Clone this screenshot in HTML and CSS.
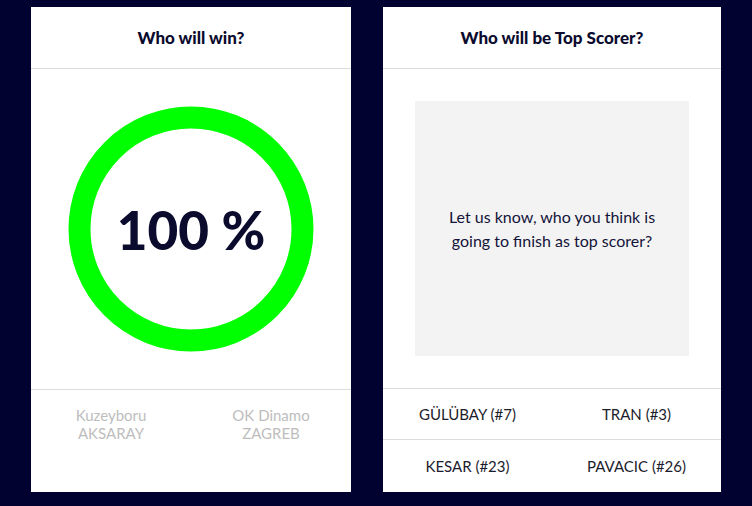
FILE: index.html
```html
<!DOCTYPE html>
<html>
<head>
<meta charset="utf-8">
<link rel="stylesheet" href="styles.css">
</head>
<body>
<div class="page">
  <section class="card card-win">
    <header class="card-head">Who will win?</header>
    <div class="win-body">
      <div class="ring">
        <svg width="246" height="246" viewBox="0 0 246 246">
          <circle cx="123" cy="123" r="111.5" fill="none" stroke="#00ff00" stroke-width="22"/>
        </svg>
        <span class="ring-label">100 %</span>
      </div>
    </div>
    <div class="teams">
      <div class="team">Kuzeyboru<br>AKSARAY</div>
      <div class="team">OK Dinamo<br>ZAGREB</div>
    </div>
  </section>
  <section class="card card-scorer">
    <header class="card-head">Who will be Top Scorer?</header>
    <div class="scorer-body">
      <div class="prompt">Let us know, who you think is<br>going to finish as top scorer?</div>
    </div>
    <div class="players">
      <div class="player">GÜLÜBAY (#7)</div>
      <div class="player">TRAN (#3)</div>
      <div class="player">KESAR (#23)</div>
      <div class="player">PAVACIC (#26)</div>
    </div>
  </section>
</div>
</body>
</html>
```
FILE: styles.css
```css
html, body {
  margin: 0;
  padding: 0;
  background: #020230;
}
body {
  font-family: Lato, "Open Sans", sans-serif;
  color: #0b0b2e;
}
.page {
  display: flex;
  gap: 32px;
  padding: 7px 31px 14px 31px;
  height: 485px;
}
.card {
  background: #ffffff;
  display: flex;
  flex-direction: column;
  height: 485px;
}
.card-win { width: 320px; }
.card-scorer { width: 338px; }
.card-head {
  height: 61px;
  border-bottom: 1px solid #dcdcdc;
  display: flex;
  align-items: center;
  justify-content: center;
  font-weight: 900;
  font-size: 17px;
  color: #0b0b2e;
}
.win-body {
  height: 320px;
  border-bottom: 1px solid #dcdcdc;
  display: flex;
  align-items: center;
  justify-content: center;
}
.ring {
  position: relative;
  width: 246px;
  height: 246px;
}
.ring svg { display: block; }
.ring-label {
  position: absolute;
  inset: 0;
  display: flex;
  align-items: center;
  justify-content: center;
  font-size: 53px;
  font-weight: 900;
  color: #0b0b2e;
}
.teams {
  flex: 1;
  display: grid;
  grid-template-columns: 1fr 1fr;
  padding-top: 16px;
}
.team {
  text-align: center;
  color: #bdbdbd;
  font-size: 15px;
  line-height: 18px;
}
.scorer-body {
  height: 320px;
  border-bottom: 1px solid #dcdcdc;
  padding: 32px;
  box-sizing: border-box;
  display: flex;
}
.prompt {
  flex: 1;
  background: #f3f3f3;
  display: flex;
  align-items: center;
  justify-content: center;
  text-align: center;
  font-size: 16px;
  line-height: 24px;
  color: #14143a;
}
.players {
  flex: 1;
  display: grid;
  grid-template-columns: 1fr 1fr;
  grid-template-rows: 51px 1fr;
}
.player {
  display: flex;
  align-items: center;
  justify-content: center;
  font-size: 15px;
  color: #1c1c2c;
}
.player:nth-child(-n+2) {
  border-bottom: 1px solid #dcdcdc;
}
```
